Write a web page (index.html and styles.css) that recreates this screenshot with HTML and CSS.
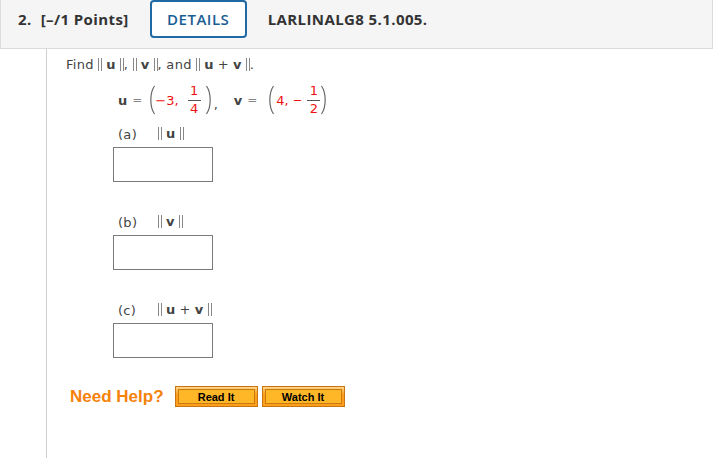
FILE: index.html
```html
<!DOCTYPE html>
<html>
<head>
<meta charset="utf-8">
<link rel="stylesheet" href="styles.css">
</head>
<body>
<div class="page">
  <div class="header">
    <span class="num">2.</span>
    <span class="pts">[–/1 Points]</span>
    <span class="details">DETAILS</span>
    <span class="code">LARLINALG8 5.1.005.</span>
  </div>
  <div class="main">
    <p class="find">Find <span class="norm"><i class="bar"></i><b>u</b><i class="bar"></i></span>, <span class="norm"><i class="bar"></i><b>v</b><i class="bar"></i></span>, and <span class="norm"><i class="bar"></i><b>u</b> + <b>v</b><i class="bar"></i></span>.</p>
    <div class="eq">
      <b class="var">u</b><span class="op">=</span>
      <svg class="paren" viewBox="0 0 8 30" width="8" height="30"><path d="M6.5 1 C1.6 8 1.6 22 6.5 29" fill="none" stroke="#666" stroke-width="1.2"/></svg>
      <span class="red n1">−3,</span>
      <span class="frac f1"><span class="red">1</span><span class="line"></span><span class="red">4</span></span>
      <svg class="paren" viewBox="0 0 8 30" width="8" height="30"><path d="M1.5 1 C6.4 8 6.4 22 1.5 29" fill="none" stroke="#666" stroke-width="1.2"/></svg><span class="comma">,</span>
      <b class="var">v</b><span class="op op-v">=</span>
      <svg class="paren" viewBox="0 0 8 30" width="8" height="30"><path d="M6.5 1 C1.6 8 1.6 22 6.5 29" fill="none" stroke="#666" stroke-width="1.2"/></svg>
      <span class="red n2">4,</span>
      <span class="red minus">−</span>
      <span class="frac f2"><span class="red">1</span><span class="line"></span><span class="red">2</span></span>
      <svg class="paren" viewBox="0 0 8 30" width="8" height="30"><path d="M1.5 1 C6.4 8 6.4 22 1.5 29" fill="none" stroke="#666" stroke-width="1.2"/></svg>
    </div>
    <div class="part part-a">
      <div class="label"><span class="letter">(a)</span><span class="norm"><i class="bar"></i><b>u</b><i class="bar"></i></span></div>
      <div class="box"></div>
    </div>
    <div class="part">
      <div class="label"><span class="letter">(b)</span><span class="norm"><i class="bar"></i><b>v</b><i class="bar"></i></span></div>
      <div class="box"></div>
    </div>
    <div class="part part-c">
      <div class="label"><span class="letter">(c)</span><span class="norm"><i class="bar"></i><b>u</b> + <b>v</b><i class="bar"></i></span></div>
      <div class="box"></div>
    </div>
    <div class="help">
      <span class="need">Need Help?</span>
      <span class="btn"><span class="inner">Read It</span></span>
      <span class="btn"><span class="inner">Watch It</span></span>
    </div>
  </div>
</div>
</body>
</html>
```
FILE: styles.css
```css
html, body {
  margin: 0;
  padding: 0;
  background: #fff;
}
.page {
  width: 713px;
  height: 458px;
  display: flex;
  flex-direction: column;
  overflow: hidden;
}
.header {
  height: 49px;
  box-sizing: border-box;
  flex: none;
  display: flex;
  align-items: center;
  padding: 0 0 10px 17px;
  background: #f5f5f5;
  border: 1px solid #dcdcdc;
  border-top: 0;
  font-family: "Open Sans", sans-serif;
  font-weight: 700;
  font-size: 15px;
  letter-spacing: 0.4px;
  color: #333;
}
.num { margin-right: 9px; }
.details {
  margin-left: 21px;
  width: 97px;
  height: 38px;
  box-sizing: border-box;
  border: 2px solid #1f6aa5;
  border-radius: 4px;
  display: flex;
  align-items: center;
  justify-content: center;
  color: #1a5e94;
  font-weight: 600;
  letter-spacing: 0.5px;
  background: #fff;
}
.code { margin-left: 21px; }
.main {
  flex: 1;
  margin-left: 46px;
  border-left: 1px solid #cfcfcf;
  padding-left: 19px;
  font-family: "DejaVu Sans", Verdana, sans-serif;
  font-size: 13px;
  color: #444;
}
.find {
  margin: 0;
  padding-top: 7px;
  height: 18px;
  line-height: 18px;
  letter-spacing: 0.3px;
}
.norm {
  display: inline-flex;
  align-items: center;
  gap: 4px;
  vertical-align: middle;
  margin-top: -2px;
}
.norm b { color: #444; }
.bar {
  display: inline-block;
  width: 2px;
  height: 13px;
  border-left: 1px solid #888;
  border-right: 1px solid #888;
}
.eq {
  display: flex;
  align-items: center;
  height: 34px;
  margin-top: 9px;
  padding-left: 52px;
  font-size: 13px;
}
.var { color: #444; }
.op { color: #888; margin: 0 6px 0 5px; font-size: 12px; }
.op-v { margin-right: 10px; }
.paren { flex: none; }
.red { color: #ee1111; }
.n1 { margin-left: -1px; }
.n2 { margin-left: 1px; }
.minus { margin-left: 4px; font-size: 11.5px; }
.frac {
  display: inline-flex;
  flex-direction: column;
  align-items: center;
  font-size: 13px;
  line-height: 14px;
}
.f1 { margin: 0 4px 0 9px; }
.f2 { margin: 0 0 0 5px; }
.frac .line {
  width: 13px;
  height: 1px;
  background: #555;
  margin: 2px 0 1px;
}
.comma { align-self: center; margin-top: 8px; margin-left: 1px; margin-right: 16px; }
.part {
  padding-left: 47px;
}
.label {
  display: flex;
  align-items: center;
  height: 20px;
  margin-top: 7px;
  margin-bottom: 3px;
  padding-left: 5px;
  letter-spacing: 0.3px;
}
.letter {
  width: 40px;
}
.box {
  width: 100px;
  height: 35px;
  box-sizing: border-box;
  border: 1px solid #7a7a7a;
  margin-bottom: 30px;
}
.part-c .box { margin-bottom: 0; }
.help {
  display: flex;
  align-items: center;
  gap: 4px;
  margin-top: 28px;
  padding-left: 4px;
}
.need {
  font-family: "Liberation Sans", Arial, sans-serif;
  font-weight: 700;
  font-size: 17px;
  line-height: 21px;
  color: #f5820a;
  margin-right: 7px;
}
.btn {
  display: inline-flex;
  width: 83px;
  height: 21px;
  box-sizing: border-box;
  border: 1px solid #c77511;
  background: linear-gradient(#ffd58a, #ff9e1a 40%, #ff9e1a);
  padding: 2px;
}
.btn .inner {
  flex: 1;
  display: flex;
  align-items: center;
  justify-content: center;
  border: 1px solid #c8790f;
  background: #ffb728;
  font-family: "Liberation Sans", Arial, sans-serif;
  font-weight: 700;
  font-size: 11px;
  color: #000;
}
```
